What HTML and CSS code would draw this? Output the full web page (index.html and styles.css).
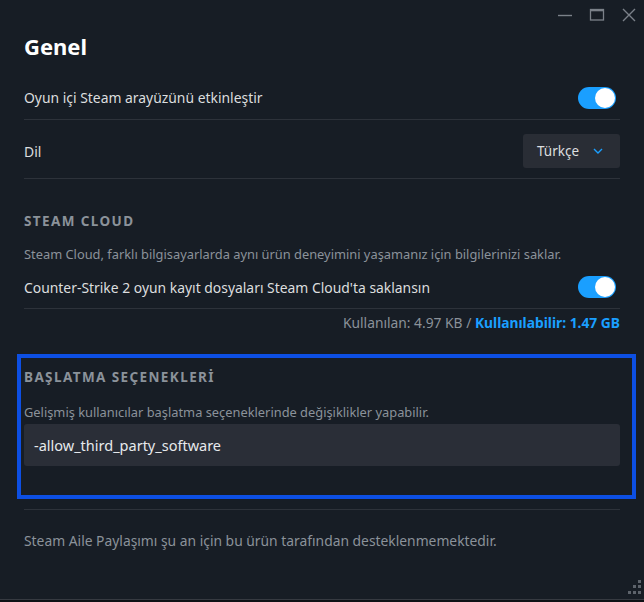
FILE: index.html
```html
<!DOCTYPE html>
<html lang="tr">
<head>
<meta charset="utf-8">
<title>Genel</title>
<link rel="stylesheet" href="styles.css">
</head>
<body>
<div class="window">
  <div class="titlebar">
    <button class="winbtn" aria-label="Küçült">
      <svg width="16" height="16" viewBox="0 0 16 16"><line x1="1" y1="8.5" x2="15" y2="8.5" stroke="currentColor" stroke-width="1.4"/></svg>
    </button>
    <button class="winbtn" aria-label="Büyüt">
      <svg width="16" height="16" viewBox="0 0 16 16"><rect x="1.5" y="2.5" width="13" height="10.5" fill="none" stroke="currentColor" stroke-width="1.3"/><line x1="1.5" y1="3.3" x2="14.5" y2="3.3" stroke="currentColor" stroke-width="2"/></svg>
    </button>
    <button class="winbtn" aria-label="Kapat">
      <svg width="16" height="16" viewBox="0 0 16 16"><path d="M2 2 L14 14 M14 2 L2 14" stroke="currentColor" stroke-width="1.4" fill="none"/></svg>
    </button>
  </div>

  <main class="content">
    <h1 class="title">Genel</h1>

    <div class="row row-first">
      <span class="label">Oyun içi Steam arayüzünü etkinleştir</span>
      <span class="toggle on"><span class="knob"></span></span>
    </div>

    <div class="row row-lang">
      <span class="label">Dil</span>
      <div class="select">
        <span>Türkçe</span>
        <svg class="chev" width="10" height="6" viewBox="0 0 10 6"><path d="M1 1 L5 5 L9 1" stroke="#1a9fff" stroke-width="1.4" fill="none"/></svg>
      </div>
    </div>

    <section class="section cloud">
      <h2 class="section-head">Steam Cloud</h2>
      <p class="desc">Steam Cloud, farklı bilgisayarlarda aynı ürün deneyimini yaşamanız için bilgilerinizi saklar.</p>
      <div class="row row-cloud">
        <span class="label">Counter-Strike 2 oyun kayıt dosyaları Steam Cloud'ta saklansın</span>
        <span class="toggle on"><span class="knob"></span></span>
      </div>
      <p class="usage">Kullanılan: 4.97 KB / <strong>Kullanılabilir: 1.47 GB</strong></p>
    </section>

    <section class="launch">
      <h2 class="section-head">Başlatma seçenekleri</h2>
      <p class="desc">Gelişmiş kullanıcılar başlatma seçeneklerinde değişiklikler yapabilir.</p>
      <div class="input">-allow_third_party_software</div>
    </section>

    <div class="divider"></div>
    <p class="footer-note">Steam Aile Paylaşımı şu an için bu ürün tarafından desteklenmemektedir.</p>
  </main>

  <div class="grip" aria-hidden="true">
    <i class="d d1"></i><i class="d d2"></i><i class="d d3"></i>
    <i class="d d4"></i><i class="d d5"></i><i class="d d6"></i>
  </div>
</div>
</body>
</html>
```

FILE: styles.css
```css
* { box-sizing: border-box; }

html, body {
  margin: 0;
  padding: 0;
  background: #0e1115;
}

body {
  font-family: "Noto Sans", "Liberation Sans", sans-serif;
  color: #dcdedf;
}

.window {
  position: relative;
  width: 644px;
  height: 600px;
  background: #171d25;
  border-bottom: 1px solid #363a41;
  overflow: hidden;
}

/* window buttons */
.titlebar {
  display: flex;
  justify-content: flex-end;
  height: 30px;
  padding: 7px 7px 0 0;
  gap: 16px;
}
.winbtn {
  width: 16px;
  height: 16px;
  padding: 0;
  border: 0;
  background: none;
  color: #7b8189;
  display: flex;
}

.content {
  padding: 0 24px;
}

.title {
  margin: 2px 0 0;
  font-size: 22px;
  line-height: 28px;
  font-weight: 700;
  color: #ffffff;
}

.row {
  display: flex;
  align-items: center;
  justify-content: space-between;
  border-bottom: 1px solid #2d323a;
}
.row-first { height: 60px; padding-top: 16px; }
.row-lang { height: 59px; padding-top: 4px; }
.row-cloud { height: 39px; padding-bottom: 4px; }

.label {
  font-size: 13.9px;
  color: #dcdedf;
}

.toggle {
  width: 38px;
  height: 22px;
  margin-right: 4px;
  border-radius: 11px;
  background: #3d4450;
  display: flex;
  align-items: center;
  padding: 0 1px;
}
.toggle.on {
  background: #1a9fff;
  justify-content: flex-end;
}
.knob {
  width: 20px;
  height: 20px;
  border-radius: 50%;
  background: #ffffff;
}

.select {
  width: 97px;
  height: 34px;
  border-radius: 3px;
  background: #292d35;
  display: flex;
  align-items: center;
  padding: 0 14px;
  justify-content: space-between;
  font-size: 13.5px;
  color: #dcdedf;
}
.chev { margin-right: 3px; }

.section-head {
  margin: 0;
  font-size: 13.5px;
  line-height: 18px;
  font-weight: 700;
  letter-spacing: 1.4px;
  text-transform: uppercase;
  color: #8b929a;
}

.desc {
  margin: 0;
  font-size: 12.85px;
  line-height: 18px;
  color: #8b929a;
}

.cloud { padding-top: 33px; }
.cloud .desc { margin-top: 15px; }
.cloud .row-cloud { margin-top: 7px; }

.usage {
  margin: 5px 0 0;
  text-align: right;
  font-size: 13.8px;
  line-height: 18px;
  color: #8b929a;
}
.usage strong { color: #1a9fff; font-weight: 700; }

.launch {
  margin: 22px -16px 0 -7px;
  border: 4px solid #0d4fe3;
  padding: 10px 12px 29px 3px;
}
.launch .desc { margin-top: 17px; }

.input {
  margin-top: 3px;
  height: 42px;
  border-radius: 3px;
  background: #2a2e37;
  display: flex;
  align-items: center;
  padding: 0 10px;
  font-size: 14.5px;
  color: #e6e9ec;
}

.divider {
  margin-top: 10px;
  height: 1px;
  background: #2d323a;
}

.footer-note {
  margin: 22px 0 0;
  font-size: 13.85px;
  line-height: 18px;
  color: #8b929a;
}

/* resize grip in the lower right corner */
.grip {
  position: absolute;
  right: 0;
  bottom: 0;
  width: 16px;
  height: 20px;
}
.d {
  position: absolute;
  width: 3px;
  height: 3px;
  background: #5d636b;
}
.d1 { right: 3px; top: 1px; }
.d2 { right: 3px; top: 6px; }
.d3 { right: 8px; top: 6px; }
.d4 { right: 3px; top: 12px; }
.d5 { right: 8px; top: 12px; }
.d6 { right: 13px; top: 12px; }
```
